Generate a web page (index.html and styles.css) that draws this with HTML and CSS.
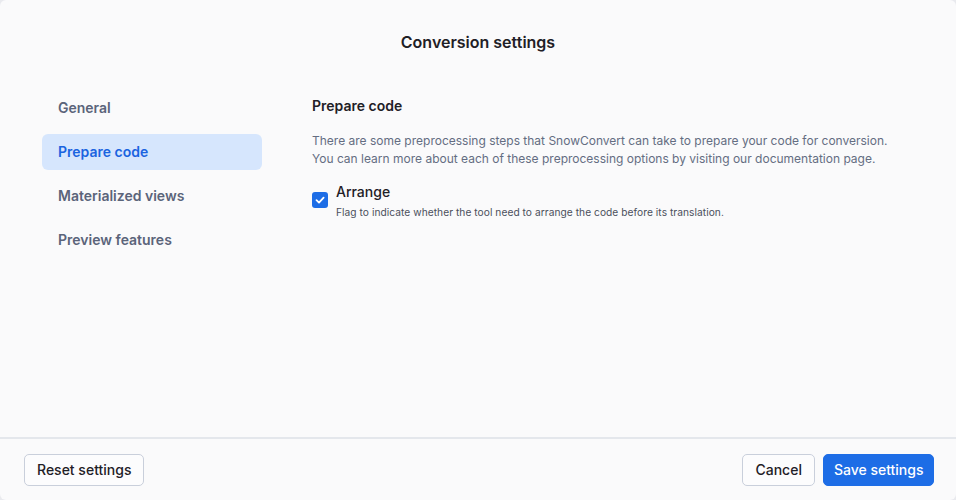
FILE: index.html
```html
<!DOCTYPE html>
<html>
<head>
<meta charset="utf-8">
<link rel="stylesheet" href="styles.css">
</head>
<body>
<div class="dialog">
  <header class="title">Conversion settings</header>
  <div class="main">
    <nav class="sidebar">
      <div class="nav-item">General</div>
      <div class="nav-item active">Prepare code</div>
      <div class="nav-item">Materialized views</div>
      <div class="nav-item">Preview features</div>
    </nav>
    <section class="content">
      <h2 class="heading">Prepare code</h2>
      <p class="intro">There are some preprocessing steps that SnowConvert can take to prepare your code for conversion.<br>You can learn more about each of these preprocessing options by visiting our documentation page.</p>
      <div class="option">
        <span class="checkbox">
          <svg width="12" height="12" viewBox="0 0 12 12"><path d="M2.5 6.2 L5 8.6 L9.6 3.6" fill="none" stroke="#fff" stroke-width="1.8" stroke-linecap="round" stroke-linejoin="round"/></svg>
        </span>
        <div class="option-text">
          <div class="option-label">Arrange</div>
          <div class="option-desc">Flag to indicate whether the tool need to arrange the code before its translation.</div>
        </div>
      </div>
    </section>
  </div>
  <footer class="footer">
    <button class="btn">Reset settings</button>
    <div class="actions">
      <button class="btn cancel">Cancel</button>
      <button class="btn primary">Save settings</button>
    </div>
  </footer>
</div>
</body>
</html>
```
FILE: styles.css
```css
* { box-sizing: border-box; }
html, body { margin: 0; padding: 0; background: #e9eaee; }
body { font-family: Inter, "Noto Sans", sans-serif; }
.dialog {
  width: 956px;
  height: 500px;
  background: #fafafb;
  border-radius: 6px;
  display: flex;
  flex-direction: column;
  overflow: hidden;
}
.title {
  text-align: center;
  font-size: 16px;
  font-weight: 600;
  color: #1f2026;
  padding-top: 32px;
  height: 90px;
  line-height: 20px;
}
.main {
  flex: 1;
  display: flex;
}
.sidebar {
  width: 220px;
  margin-left: 42px;
  display: flex;
  flex-direction: column;
  gap: 8px;
}
.nav-item {
  height: 36px;
  line-height: 36px;
  padding-left: 16px;
  font-size: 14px;
  font-weight: 600;
  color: #5b647a;
  border-radius: 6px;
}
.active {
  background: #d6e6fd;
  color: #1b64e0;
}
.content {
  margin-left: 50px;
  padding-top: 6px;
}
.heading {
  margin: 0;
  font-size: 14px;
  font-weight: 600;
  color: #1f2026;
  line-height: 20px;
}
.intro {
  margin: 16px 0 0;
  font-size: 12px;
  line-height: 18px;
  color: #646d82;
}
.option {
  display: flex;
  gap: 8px;
  margin-top: 14px;
}
.checkbox {
  width: 16px;
  height: 16px;
  margin-top: 10px;
  background: #1d6de6;
  border-radius: 3px;
  display: flex;
  align-items: center;
  justify-content: center;
}
.option-label {
  font-size: 14px;
  font-weight: 500;
  color: #1f2026;
  line-height: 20px;
}
.option-desc {
  margin-top: 2px;
  font-size: 10.2px;
  letter-spacing: 0.05px;
  color: #4a4f5c;
  line-height: 16px;
}
.footer {
  height: 63px;
  border-top: 2px solid #e4e7ec;
  display: flex;
  align-items: center;
  justify-content: space-between;
  padding: 0 22px 0 24px;
}
.actions {
  display: flex;
  gap: 8px;
}
.btn {
  font-family: Inter, "Noto Sans", sans-serif;
  height: 32px;
  padding: 0 12px;
  font-size: 14px;
  font-weight: 500;
  color: #1f2026;
  background: #fcfcfd;
  border: 1px solid #c9cfdb;
  border-radius: 5px;
}
.cancel { padding: 0 12.5px; }
.primary {
  padding: 0 9.5px;
  background: #1d6de6;
  border-color: #1d6de6;
  color: #fff;
}
```
